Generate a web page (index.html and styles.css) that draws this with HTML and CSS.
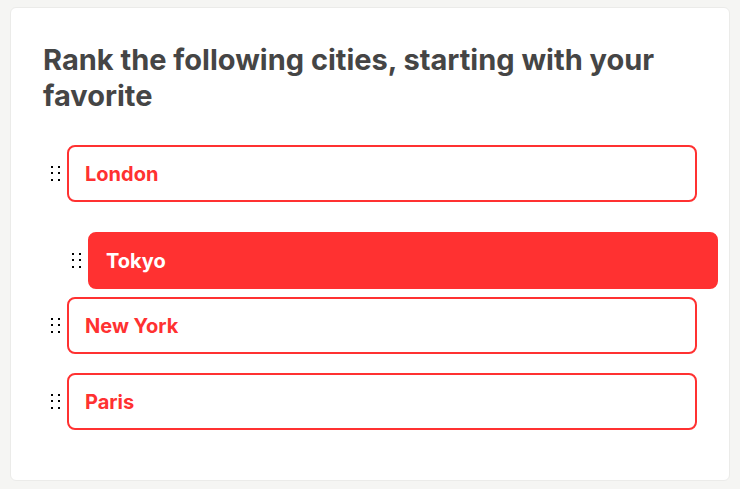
FILE: index.html
```html
<!DOCTYPE html>
<html lang="en">
<head>
  <meta charset="UTF-8">
  <title>Rank cities</title>
  <link rel="stylesheet" href="styles.css">
</head>
<body>
  <div class="card">
    <h2>Rank the following cities, starting with your favorite</h2>

    <ul class="rank-list">
      <li class="rank-row">
        <span class="handle"><svg width="9" height="15" viewBox="0 0 9 15"><rect x="0" y="0" width="2" height="2"/><rect x="7" y="0" width="2" height="2"/><rect x="0" y="6" width="2" height="2"/><rect x="7" y="6" width="2" height="2"/><rect x="0" y="13" width="2" height="2"/><rect x="7" y="13" width="2" height="2"/></svg></span>
        <div class="rank-item">London</div>
      </li>
      <li class="rank-row dragging">
        <span class="handle"><svg width="9" height="15" viewBox="0 0 9 15"><rect x="0" y="0" width="2" height="2"/><rect x="7" y="0" width="2" height="2"/><rect x="0" y="6" width="2" height="2"/><rect x="7" y="6" width="2" height="2"/><rect x="0" y="13" width="2" height="2"/><rect x="7" y="13" width="2" height="2"/></svg></span>
        <div class="rank-item">Tokyo</div>
      </li>
      <li class="rank-row">
        <span class="handle"><svg width="9" height="15" viewBox="0 0 9 15"><rect x="0" y="0" width="2" height="2"/><rect x="7" y="0" width="2" height="2"/><rect x="0" y="6" width="2" height="2"/><rect x="7" y="6" width="2" height="2"/><rect x="0" y="13" width="2" height="2"/><rect x="7" y="13" width="2" height="2"/></svg></span>
        <div class="rank-item">New York</div>
      </li>
      <li class="rank-row">
        <span class="handle"><svg width="9" height="15" viewBox="0 0 9 15"><rect x="0" y="0" width="2" height="2"/><rect x="7" y="0" width="2" height="2"/><rect x="0" y="6" width="2" height="2"/><rect x="7" y="6" width="2" height="2"/><rect x="0" y="13" width="2" height="2"/><rect x="7" y="13" width="2" height="2"/></svg></span>
        <div class="rank-item">Paris</div>
      </li>
    </ul>
  </div>
</body>
</html>
```

FILE: styles.css
```css
body {
  margin: 0;
  padding: 7px 10px 0 10px;
  background: #f5f5f3;
  font-family: 'Inter', 'Noto Sans', sans-serif;
}
.card {
  background: #fff;
  border: 1px solid #ebebe9;
  border-radius: 6px;
  padding: 34px 32px 50px 32px;
}
h2 {
  margin: 0 0 31px 0;
  font-size: 29px;
  line-height: 36px;
  font-weight: 700;
  color: #454545;
}
.rank-list {
  list-style: none;
  margin: 0;
  padding: 0;
  display: flex;
  flex-direction: column;
  gap: 19px;
}
.rank-row {
  display: flex;
  align-items: center;
}
.handle {
  width: 24px;
  display: flex;
  justify-content: center;
}
.handle svg { fill: #000; }
.rank-item {
  flex: 1;
  height: 57px;
  box-sizing: border-box;
  border: 2px solid #ff3131;
  border-radius: 8px;
  padding-left: 16px;
  display: flex;
  align-items: center;
  font-size: 20px;
  font-weight: 700;
  color: #ff3131;
}
.dragging {
  transform: translate(21px, 11px);
}
.dragging .rank-item {
  background: #ff3131;
  color: #fff;
}
```
